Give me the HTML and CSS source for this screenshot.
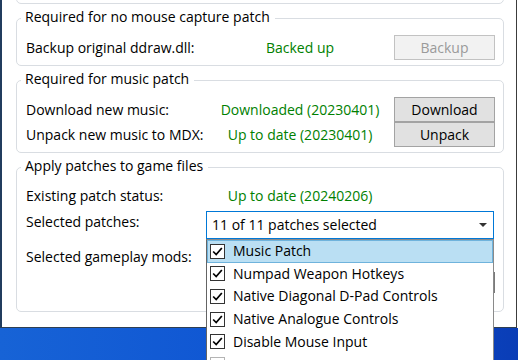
FILE: index.html
```html
<!DOCTYPE html>
<html lang="en">

<head>
	<meta charset="UTF-8">
	<meta name="viewport" content="width=device-width, initial-scale=1.0">
	<title>Patcher</title>
	<link rel="stylesheet" href="styles.css">
</head>

<body>
	<div class="window">
		<div class="group group-cut"></div>

		<section class="group">
			<div class="group-title">Required for no mouse capture patch</div>
			<div class="row first">
				<span class="label">Backup original ddraw.dll:</span>
				<span class="status">Backed up</span>
				<button class="btn" disabled>Backup</button>
			</div>
		</section>

		<section class="group">
			<div class="group-title">Required for music patch</div>
			<div class="row first">
				<span class="label">Download new music:</span>
				<span class="status">Downloaded (20230401)</span>
				<button class="btn">Download</button>
			</div>
			<div class="row">
				<span class="label">Unpack new music to MDX:</span>
				<span class="status">Up to date (20230401)</span>
				<button class="btn">Unpack</button>
			</div>
		</section>

		<section class="group group-patches">
			<div class="group-title">Apply patches to game files</div>
			<div class="row row-status">
				<span class="label">Existing patch status:</span>
				<span class="status">Up to date (20240206)</span>
			</div>
			<div class="row row-combo">
				<span class="label">Selected patches:</span>
				<div class="combo">
					<span>11 of 11 patches selected</span>
					<span class="arrow"></span>
					<ul class="dropdown">
						<li class="item selected"><span class="check"><svg viewBox="0 0 15 15"><path d="M2.5 7.5 L6 11 L12.5 3.5"/></svg></span>Music Patch</li>
						<li class="item"><span class="check"><svg viewBox="0 0 15 15"><path d="M2.5 7.5 L6 11 L12.5 3.5"/></svg></span>Numpad Weapon Hotkeys</li>
						<li class="item"><span class="check"><svg viewBox="0 0 15 15"><path d="M2.5 7.5 L6 11 L12.5 3.5"/></svg></span>Native Diagonal D-Pad Controls</li>
						<li class="item"><span class="check"><svg viewBox="0 0 15 15"><path d="M2.5 7.5 L6 11 L12.5 3.5"/></svg></span>Native Analogue Controls</li>
						<li class="item"><span class="check"><svg viewBox="0 0 15 15"><path d="M2.5 7.5 L6 11 L12.5 3.5"/></svg></span>Disable Mouse Input</li>
						<li class="item"><span class="check dim"></span></li>
					</ul>
				</div>
			</div>
			<div class="row row-mods">
				<span class="label">Selected gameplay mods:</span>
			</div>
			<div class="row row-apply">
				<button class="btn btn-apply" aria-label="Apply"></button>
			</div>
		</section>
	</div>
	<div class="desktop"></div>
</body>
</html>
```

FILE: styles.css
```css
html,
body {
	margin: 0;
	padding: 0;
	height: 360px;
	overflow: hidden;
	background-color: #fff;
}

body {
	font-family: "Open Sans", "Noto Sans", sans-serif;
	font-size: 14px;
	line-height: 20px;
	color: #000;
}

.window {
	display: flow-root;
	box-sizing: border-box;
	width: 517px;
	height: 328px;
	background-color: #fff;
	border-left: 2px solid #213c5e;
	border-right: 1px solid #3c3c3c;
	border-bottom: 1px solid #2f3f52;
}

.desktop {
	height: 32px;
	background: linear-gradient(90deg, #1763d6, #0d52d2 60%, #0a3db6);
}

.group {
	box-sizing: border-box;
	width: 488px;
	margin: 14px 0 0 14px;
	padding: 0 8px 5px 9px;
	border: 1px solid #d9dde2;
	border-radius: 5px;
}

.group-cut {
	height: 34px;
	margin-top: -30px;
}

.group-title {
	width: fit-content;
	margin: -12px 0 0 -5px;
	padding: 0 5px 0 4px;
	background-color: #fff;
}

.row {
	display: grid;
	grid-template-columns: 180px 188px 101px;
	align-items: center;
	height: 25px;
}

.row.first {
	margin-top: 8px;
}

.status {
	color: #008000;
	text-align: center;
}

.btn {
	box-sizing: border-box;
	height: 25px;
	width: 101px;
	padding: 0;
	font: inherit;
	color: #000;
	background-color: #e1e1e1;
	border: 1px solid #a3a3a3;
	border-radius: 0;
}

.btn:disabled {
	color: #9a9a9a;
	background-color: #f2f2f2;
	border-color: #c2c2c2;
}

.group-patches {
	height: 145px;
}

.row-status {
	margin-top: 7px;
}

.row-combo {
	margin-top: 3px;
	height: 28px;
	align-items: start;
}

.row-combo .label {
	padding-top: 1px;
}

.row-mods {
	margin-top: 3px;
	height: 28px;
	align-items: start;
}

.row-mods .label {
	padding-top: 5px;
}

.row-apply {
	margin-top: 2px;
	height: 21px;
}

.btn-apply {
	grid-column: 3;
	height: 21px;
	border-color: #7a7a7a;
}

.combo {
	grid-column: 2 / 4;
	position: relative;
	box-sizing: border-box;
	width: 288px;
	height: 28px;
	display: flex;
	align-items: center;
	justify-content: space-between;
	padding: 0 5px;
	background-color: #fff;
	border: 1px solid #0078d7;
}

.arrow {
	width: 0;
	height: 0;
	border-left: 4px solid transparent;
	border-right: 4px solid transparent;
	border-top: 4px solid #333;
	margin-right: 1px;
}

.dropdown {
	position: absolute;
	z-index: 2;
	top: calc(100% + 1px);
	left: -1px;
	box-sizing: border-box;
	width: 288px;
	margin: 0;
	padding: 0;
	list-style: none;
	background-color: #fff;
	border: 1px solid #8a8a8a;
	border-left-color: #646464;
	border-bottom: none;
}

.item {
	box-sizing: border-box;
	display: flex;
	align-items: center;
	height: 22.6px;
	padding-left: 2px;
	border: 1px solid transparent;
}

.item.selected {
	background-color: #badff3;
	border-color: #6fb3dc;
}

.check {
	box-sizing: border-box;
	display: inline-flex;
	width: 15px;
	height: 15px;
	margin-right: 8px;
	background-color: #fff;
	border: 1px solid #333;
}

.check.dim {
	border-color: #b4b4b4;
}

.check svg {
	width: 13px;
	height: 13px;
}

.check path {
	fill: none;
	stroke: #000;
	stroke-width: 2;
}
```
